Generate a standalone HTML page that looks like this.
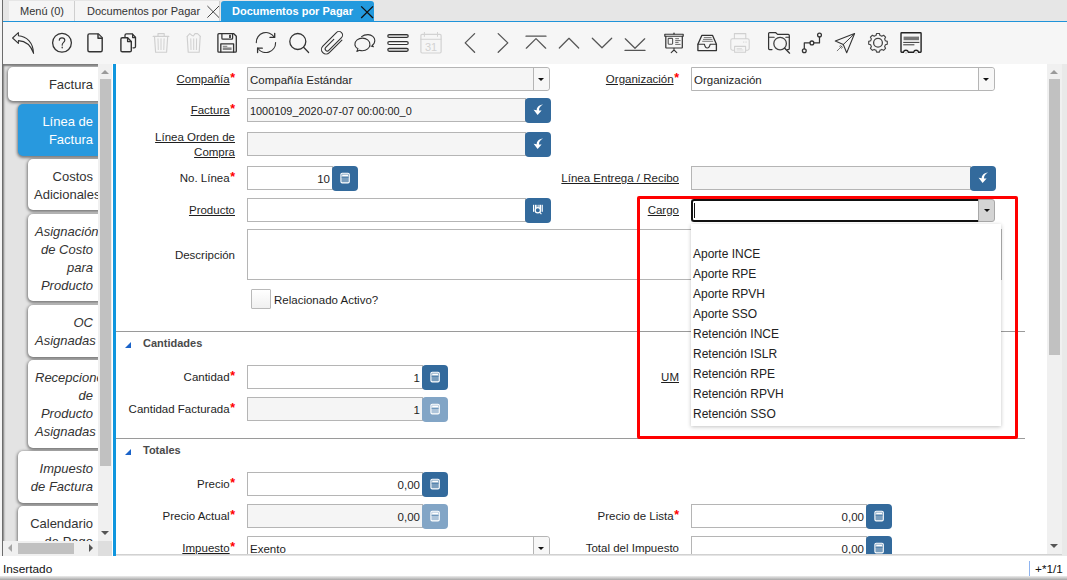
<!DOCTYPE html>
<html><head><meta charset="utf-8">
<style>
*{box-sizing:border-box;margin:0;padding:0}
html,body{width:1067px;height:580px;overflow:hidden;background:#fff;font-family:"Liberation Sans",sans-serif;color:#333}
.a{position:absolute}
/* tabs */
#tabbar{left:3px;top:0;width:1064px;height:21px;background:#e6e6e6}
.tab{position:absolute;top:1px;height:20px;background:#f5f5f5;font-size:11px;color:#333;line-height:20px}
#blueline{left:3px;top:21px;width:1064px;height:1px;background:#1f93d9}
#toolbar{left:3px;top:22px;width:1064px;height:42px;background:#f6f6f6}
/* left panel */
#lp{left:3px;top:64px;width:95px;height:477px;background:#e3e3e3;overflow:hidden;box-shadow:inset 2px 3px 2px -1px #7a7a7a}
.vt{position:absolute;right:-5px;background:#fff;border-radius:5px;box-shadow:0 1px 3px 1px rgba(0,0,0,.46);font-size:13px;line-height:18px;color:#333;text-align:right;padding-right:10px}
.vt.i{font-style:italic}
/* form */
#form{left:116px;top:64px;width:931px;height:490px;background:#fff;overflow:hidden}
.lbl{position:absolute;font-size:11.5px;color:#1e1e1e;text-align:right;white-space:nowrap}
.lbl u{text-decoration:underline;text-underline-offset:1px}
.req{color:#f00;font-weight:bold;font-size:12.5px;position:relative;top:-1px;margin-left:0.5px}
.box{position:absolute;height:24px;border:1px solid #b5b5b5;background:#fff;font-size:11.5px;line-height:22px;padding:1px 2px 0 2px;color:#1e1e1e;white-space:nowrap;overflow:hidden}
.ro{background:#f5f5f5}
.btn{position:absolute;width:26px;height:25px;background:#336a9c;border-radius:4px}
.btn.dis{background:#82a5c6}
.sec{position:absolute;left:0;height:1px;background:#9a9a9a;width:909px}
.sech{position:absolute;font-size:11px;font-weight:bold;color:#4a4a4a}
.tri{position:absolute;width:0;height:0;border-left:6px solid transparent;border-bottom:6px solid #1a63c9}
.combo{border-radius:0 3px 3px 0}
.combo .dd{position:absolute;right:0;top:0;width:16px;height:22px;border-left:1px solid #b5b5b5;background:#f7f7f7;border-radius:0 3px 3px 0}
.combo .dd:after{content:"";position:absolute;left:4px;top:9.5px;border-left:3.5px solid transparent;border-right:3.5px solid transparent;border-top:3.5px solid #111}
.fdd{border:1px solid #a8a8a8;background:#d4d4d4;border-radius:0 3px 3px 0}
.fdd:after{content:"";position:absolute;left:4.5px;top:9px;border-left:3.5px solid transparent;border-right:3.5px solid transparent;border-top:3.5px solid #111}
.caret{position:absolute;left:1px;top:2px;width:1px;height:15px;background:#111}
.chk{position:absolute;width:20px;height:20px;border:1px solid #b9b9b9;border-radius:1px;background:linear-gradient(#fff,#f0f0f0)}
</style></head>
<body>
<div class="a" style="left:0;top:0;width:2px;height:580px;background:#f5f5f5"></div>
<div class="a" style="left:2px;top:0;width:1px;height:580px;background:#6c6c6c"></div>

<div id="tabbar" class="a">
  <div class="tab" style="left:6px;width:66px;border-right:1px solid #cfcfcf;padding-left:11px">Menú (0)</div>
  <div class="tab" style="left:72px;width:145px;border-right:1px solid #cfcfcf;padding-left:12px">Documentos por Pagar</div>
  <div class="tab" style="left:218px;width:153px;background:#239ade;color:#fff;font-weight:bold;border-radius:3px 3px 0 0;padding-left:11px">Documentos por Pagar</div>
</div>
<div id="blueline" class="a"></div>
<svg class="a" style="left:0;top:0" width="400" height="21"><path d="M207.4,6 L219,17.6 M219,6 L207.4,17.6" stroke="#444" stroke-width="1"/><path d="M361.2,6.4 L373,18 M373,6.4 L361.2,18" stroke="#111" stroke-width="1.3"/></svg>
<div id="toolbar" class="a"></div>
<!--icons--><svg class="a" style="left:0;top:0" width="1067" height="64" viewBox="0 0 1067 64"><path d="M12.6,38 L18.4,32.6 L18.4,35.7 C26.5,36.2 33.2,42.5 33.6,53.4 C31,45.5 25.5,41 18.4,40.6 L18.4,43.4 Z" stroke="#333" stroke-width="1.06" fill="none" stroke-linejoin="round" stroke-linecap="round" /><circle cx="62" cy="42.8" r="9.4" stroke="#333" stroke-width="1.3" fill="none"/><path d="M59.3,40.3 C59.3,38.6 60.6,37.9 62,37.9 C63.6,37.9 64.8,38.9 64.8,40.3 C64.8,42.2 62.2,42.5 62.2,44.8 L62.2,45.3" stroke="#333" stroke-width="1.14" fill="none" stroke-linejoin="round" stroke-linecap="round" /><path d="M62.2,47.2 L62.2,47.8" stroke="#333" stroke-width="1.32" fill="none" stroke-linejoin="round" stroke-linecap="round" /><path d="M89.4,33.9 H98.4 L102.2,37.7 V50.3 Q102.2,51.8 100.7,51.8 H89.4 Q87.9,51.8 87.9,50.3 V35.4 Q87.9,33.9 89.4,33.9 Z" stroke="#333" stroke-width="1.41" fill="none" stroke-linejoin="round" stroke-linecap="round" /><path d="M98,34.2 V38.2 H102" stroke="#333" stroke-width="1.41" fill="#d8d8d8" stroke-linejoin="round" stroke-linecap="round" /><path d="M125,36.8 V35.2 Q125,33.8 126.4,33.8 H132 L135.5,37.3 V46.4 Q135.5,47.8 134.1,47.8 H133" stroke="#333" stroke-width="1.32" fill="none" stroke-linejoin="round" stroke-linecap="round" /><path d="M132.6,34 V37.6 H135.3" stroke="#333" stroke-width="1.23" fill="none" stroke-linejoin="round" stroke-linecap="round" /><path d="M122.3,37.8 H127.6 L131.3,41.5 V50.4 Q131.3,51.8 129.9,51.8 H122.3 Q120.9,51.8 120.9,50.4 V39.2 Q120.9,37.8 122.3,37.8 Z" stroke="#333" stroke-width="1.41" fill="none" stroke-linejoin="round" stroke-linecap="round" /><path d="M127.6,38 V41.6 H131.1" stroke="#333" stroke-width="1.32" fill="none" stroke-linejoin="round" stroke-linecap="round" /><path d="M153.2,36.4 H168.8" stroke="#cfcfcf" stroke-width="1.23" fill="none" stroke-linejoin="round" stroke-linecap="round" /><path d="M158,36.2 V33.6 H164.2 V36.2" stroke="#cfcfcf" stroke-width="1.14" fill="none" stroke-linejoin="round" stroke-linecap="round" /><path d="M154.5,36.6 L155.6,52.2 H166.6 L167.7,36.6" stroke="#cfcfcf" stroke-width="1.14" fill="none" stroke-linejoin="round" stroke-linecap="round" /><path d="M158,38.8 L158.3,49.6 M161,38.8 V49.6 M164.1,38.8 L163.8,49.6" stroke="#cfcfcf" stroke-width="0.97" fill="none" stroke-linejoin="round" stroke-linecap="round" /><path d="M187.2,36.4 L189.8,33.6 L192.2,35.6 L193.4,36 L195,33.6 L197.5,33.6 L200.4,36.4" stroke="#cfcfcf" stroke-width="1.06" fill="none" stroke-linejoin="round" stroke-linecap="round" /><path d="M187.2,36.6 L188.2,52.2 H199.2 L200.2,36.6" stroke="#cfcfcf" stroke-width="1.14" fill="none" stroke-linejoin="round" stroke-linecap="round" /><path d="M190.8,38.8 L191,49.6 M193.7,38.8 V49.6 M196.6,38.8 L196.4,49.6" stroke="#cfcfcf" stroke-width="0.97" fill="none" stroke-linejoin="round" stroke-linecap="round" /><path d="M218.9,33.7 H233.8 L236.3,36.3 V51.2 Q236.3,52.2 235.3,52.2 H218.9 Q217.9,52.2 217.9,51.2 V34.7 Q217.9,33.7 218.9,33.7 Z" stroke="#333" stroke-width="1.32" fill="none" stroke-linejoin="round" stroke-linecap="round" /><path d="M221.9,33.9 V38.2 Q221.9,39.2 222.9,39.2 H231.6 Q232.6,39.2 232.6,38.2 V33.9" stroke="#333" stroke-width="1.23" fill="none" stroke-linejoin="round" stroke-linecap="round" /><rect x="229.2" y="34.8" width="1.6" height="3.2" fill="#222"/><path d="M220.8,52 V43.9 H233.6 V52" stroke="#333" stroke-width="1.32" fill="none" stroke-linejoin="round" stroke-linecap="round" /><rect x="222.8" y="45.8" width="4.5" height="1" fill="#777"/><rect x="222.8" y="47.4" width="8.8" height="2.6" fill="#888"/><path d="M256.3,42.6 A9.7,9.7 0 0 1 274.3,37.2" stroke="#333" stroke-width="1.14" fill="none" stroke-linejoin="round" stroke-linecap="round" /><path d="M274.7,33.3 V37.4 H270" stroke="#333" stroke-width="1.32" fill="none" stroke-linejoin="round" stroke-linecap="round" /><path d="M275.6,42.6 A9.7,9.7 0 0 1 257.7,48" stroke="#333" stroke-width="1.14" fill="none" stroke-linejoin="round" stroke-linecap="round" /><path d="M257.6,52.5 V48.2 H262.3" stroke="#333" stroke-width="1.32" fill="none" stroke-linejoin="round" stroke-linecap="round" /><circle cx="297.8" cy="41.5" r="8" stroke="#333" stroke-width="1.3" fill="none"/><path d="M303.6,47.3 L308.6,52.5" stroke="#333" stroke-width="1.23" fill="none" stroke-linejoin="round" stroke-linecap="round" /><g transform="translate(332.3,42.6) rotate(45)"><path d="M5,-8.6 V9.2 A4.6,4.6 0 0 1 -4.2,9.2 V-10 A3.6,3.6 0 0 1 3,-10 V8 A2.1,2.1 0 0 1 -1.2,8 V-3.3" stroke="#333" stroke-width="1.1" fill="none" stroke-linecap="round"/></g><path d="M361.6,36.6 C363,35.4 365.5,34.6 368,34.6 C371.8,34.6 374.8,37.2 374.8,40.3 C374.8,42.6 373.8,44.4 372.3,45.2 L373.4,46.8 L370.8,46" stroke="#333" stroke-width="1.06" fill="none" stroke-linejoin="round" stroke-linecap="round" /><path d="M356.8,51.4 L358,48.6 C355.8,47.4 354.9,45.8 354.9,44.4 C354.9,40.7 358.3,38.1 362.4,38.1 C366.5,38.1 369.9,40.7 369.9,44.4 C369.9,48 366.5,50.7 362.4,50.7 C361.3,50.7 360.3,50.5 359.4,50.2 Z" stroke="#333" stroke-width="1.06" fill="none" stroke-linejoin="round" stroke-linecap="round" /><rect x="387.8" y="34.6" width="20.4" height="2.9" rx="1.45" stroke="#333" stroke-width="1.2" fill="#cfcfcf"/><rect x="387.8" y="41.6" width="20.4" height="2.9" rx="1.45" stroke="#333" stroke-width="1.2" fill="#fff"/><rect x="387.8" y="48.4" width="20.4" height="2.9" rx="1.45" stroke="#333" stroke-width="1.2" fill="#cfcfcf"/><rect x="420.9" y="34.4" width="20.2" height="18.6" rx="1.2" stroke="#d2d2d2" stroke-width="1.2" fill="none"/><path d="M421,39.3 H441" stroke="#d2d2d2" stroke-width="0.97" fill="none" stroke-linejoin="round" stroke-linecap="round" /><path d="M424.4,32.4 V36.4 M437.5,32.4 V36.4" stroke="#d2d2d2" stroke-width="0.97" fill="none" stroke-linejoin="round" stroke-linecap="round" /><text x="431" y="50.8" font-family="Liberation Sans" font-size="11" fill="#d2d2d2" text-anchor="middle">31</text><path d="M474.6,33.6 L465.2,42.9 L474.6,52.2" stroke="#555" stroke-width="1.32" fill="none" stroke-linejoin="round" stroke-linecap="round" stroke-linecap="butt"/><path d="M498.2,33.6 L507.8,42.9 L498.2,52.2" stroke="#555" stroke-width="1.32" fill="none" stroke-linejoin="round" stroke-linecap="round" stroke-linecap="butt"/><path d="M526,36.2 H546" stroke="#555" stroke-width="1.23" fill="none" stroke-linejoin="round" stroke-linecap="round" stroke-linecap="butt"/><path d="M526.3,48.2 L536,38.6 L545.7,48.2" stroke="#555" stroke-width="1.23" fill="none" stroke-linejoin="round" stroke-linecap="round" stroke-linecap="butt"/><path d="M559.3,48 L569,38.3 L578.7,48" stroke="#555" stroke-width="1.23" fill="none" stroke-linejoin="round" stroke-linecap="round" stroke-linecap="butt"/><path d="M592.3,38.2 L602,47.8 L611.7,38.2" stroke="#555" stroke-width="1.23" fill="none" stroke-linejoin="round" stroke-linecap="round" stroke-linecap="butt"/><path d="M625.3,38.8 L635,48.3 L644.7,38.8" stroke="#555" stroke-width="1.23" fill="none" stroke-linejoin="round" stroke-linecap="round" stroke-linecap="butt"/><path d="M625,50.4 H645" stroke="#555" stroke-width="1.23" fill="none" stroke-linejoin="round" stroke-linecap="round" stroke-linecap="butt"/><path d="M664.8,34.2 H683.2 V36.2 H664.8 Z" stroke="#333" stroke-width="1.14" fill="none" stroke-linejoin="round" stroke-linecap="round" /><path d="M674,33.8 V33.2" stroke="#333" stroke-width="1.41" fill="none" stroke-linejoin="round" stroke-linecap="round" /><path d="M665.8,36.4 V47.5 Q665.8,48 666.3,48 H681.8 Q682.3,48 682.3,47.5 V36.4" stroke="#333" stroke-width="1.23" fill="none" stroke-linejoin="round" stroke-linecap="round" /><rect x="668.2" y="38.4" width="4.4" height="5.8" rx="0.6" stroke="#555" stroke-width="1.1" fill="none"/><path d="M675.6,38.7 H678.6 M675.6,40.6 H680.2 M675.6,42.4 H678.2 M675.6,44.4 H680.2" stroke="#444" stroke-width="0.79" fill="none" stroke-linejoin="round" stroke-linecap="round" stroke-linecap="butt"/><path d="M674,48.2 V50 L671.2,52.6 M674,50 L676.8,52.6" stroke="#333" stroke-width="1.06" fill="none" stroke-linejoin="round" stroke-linecap="round" /><path d="M701.8,35.4 H712.6 L716.4,44.2 V50.6 H697.9 V44.2 Z" stroke="#333" stroke-width="1.32" fill="none" stroke-linejoin="round" stroke-linecap="round" /><path d="M698,44.2 H704.4 C705,47.4 706.2,48 707.2,48 C708.4,48 709.6,47.4 710.2,44.2 H716.3" stroke="#333" stroke-width="1.14" fill="none" stroke-linejoin="round" stroke-linecap="round" /><path d="M704.2,37.6 H711.2 M703.4,39.4 H712 M702.6,41.3 H712.8" stroke="#555" stroke-width="0.79" fill="none" stroke-linejoin="round" stroke-linecap="round" stroke-linecap="butt"/><path d="M734.4,38.4 V33.6 H745.8 V38.4" stroke="#d0d0d0" stroke-width="1.06" fill="none" stroke-linejoin="round" stroke-linecap="round" /><path d="M733.6,50.2 H732.4 Q730.8,50.2 730.8,48.6 V40.4 Q730.8,38.8 732.4,38.8 H747.6 Q749.2,38.8 749.2,40.4 V48.6 Q749.2,50.2 747.6,50.2 H746.4" stroke="#d0d0d0" stroke-width="1.06" fill="none" stroke-linejoin="round" stroke-linecap="round" /><path d="M734.6,46.4 H745.6 V52.2 H734.6 Z" stroke="#d0d0d0" stroke-width="1.06" fill="none" stroke-linejoin="round" stroke-linecap="round" /><path d="M737,48.6 H741.5 M737,50 H743" stroke="#d0d0d0" stroke-width="0.7" fill="none" stroke-linejoin="round" stroke-linecap="round" /><path d="M743.4,42.1 H743.9 M745.8,42.1 H746.3" stroke="#d0d0d0" stroke-width="0.88" fill="none" stroke-linejoin="round" stroke-linecap="round" /><path d="M772,49.6 H769.6 Q768.6,49.6 768.6,48.6 V33.6 Q768.6,32.7 769.6,32.7 H775.8 L777.6,34.4 H788.3 Q789.3,34.4 789.3,35.4 V48.6 Q789.3,49.6 788.3,49.6 H787.4" stroke="#333" stroke-width="1.23" fill="none" stroke-linejoin="round" stroke-linecap="round" /><path d="M768.8,37.2 H774.2 M785.8,37.2 H789.2" stroke="#333" stroke-width="1.14" fill="none" stroke-linejoin="round" stroke-linecap="round" /><circle cx="780.1" cy="43.6" r="6.3" stroke="#444" stroke-width="1.3" fill="none"/><path d="M784.7,48.2 L789.6,53.2" stroke="#333" stroke-width="1.23" fill="none" stroke-linejoin="round" stroke-linecap="round" /><path d="M804.3,48.7 V42.9 H809.9 M813.9,42.9 H819.5 V37" stroke="#333" stroke-width="1.23" fill="none" stroke-linejoin="round" stroke-linecap="round" stroke-linecap="butt"/><circle cx="804.3" cy="50.7" r="1.9" stroke="#333" stroke-width="1.3" fill="none"/><circle cx="811.9" cy="42.9" r="1.9" stroke="#333" stroke-width="1.3" fill="none"/><circle cx="819.5" cy="35" r="1.9" stroke="#333" stroke-width="1.3" fill="none"/><path d="M854.6,33.5 L835.3,41.1 L843.3,44.5 L846.7,52.7 Z" stroke="#333" stroke-width="1.06" fill="none" stroke-linejoin="round" stroke-linecap="round" /><path d="M843.3,44.5 L854.2,34" stroke="#333" stroke-width="0.97" fill="none" stroke-linejoin="round" stroke-linecap="round" /><path d="M837.2,50.8 L842,46 M839.6,46.4 L841.6,48.3 M840.6,45.6 L842.6,47.4" stroke="#555" stroke-width="0.79" fill="none" stroke-linejoin="round" stroke-linecap="round" /><path d="M885.32,40.77 L887.29,41.40 L887.29,44.20 L885.32,44.83 A7.6,7.6 0 0 1 884.61,46.55 L884.61,46.55 L885.57,48.38 L883.58,50.37 L881.75,49.41 A7.6,7.6 0 0 1 880.03,50.12 L880.03,50.12 L879.40,52.09 L876.60,52.09 L875.97,50.12 A7.6,7.6 0 0 1 874.25,49.41 L874.25,49.41 L872.42,50.37 L870.43,48.38 L871.39,46.55 A7.6,7.6 0 0 1 870.68,44.83 L870.68,44.83 L868.71,44.20 L868.71,41.40 L870.68,40.77 A7.6,7.6 0 0 1 871.39,39.05 L871.39,39.05 L870.43,37.22 L872.42,35.23 L874.25,36.19 A7.6,7.6 0 0 1 875.97,35.48 L875.97,35.48 L876.60,33.51 L879.40,33.51 L880.03,35.48 A7.6,7.6 0 0 1 881.75,36.19 L881.75,36.19 L883.58,35.23 L885.57,37.22 L884.61,39.05 A7.6,7.6 0 0 1 885.32,40.77 Z" stroke="#444" stroke-width="1.14" fill="none" stroke-linejoin="round" stroke-linecap="round" /><circle cx="878" cy="42.8" r="4.4" stroke="#444" stroke-width="1.3" fill="none"/><path d="M901.6,32.8 H920.5 Q921.1,32.8 921.1,33.4 V51.6 Q921.1,52.2 920.5,52.2 H918.6 A2.6,2.6 0 0 0 913.6,52.2 H908.4 A2.6,2.6 0 0 0 903.4,52.2 H901.6 Q901,52.2 901,51.6 V33.4 Q901,32.8 901.6,32.8 Z" stroke="#222" stroke-width="1.41" fill="none" stroke-linejoin="round" stroke-linecap="round" /><rect x="903.6" y="36.6" width="15.4" height="3.6" fill="#777"/><path d="M903.6,42.4 H919 M903.6,44.8 H914" stroke="#333" stroke-width="0.97" fill="none" stroke-linejoin="round" stroke-linecap="round" stroke-linecap="butt"/><path d="M906,53 H906.1 M916,53 H916.1" stroke="#666" stroke-width="0.88" fill="none" stroke-linejoin="round" stroke-linecap="round" /></svg><!--/icons-->

<div id="lp" class="a">
  <div class="vt" style="left:5px;top:3px;height:34px;padding-top:9px">Factura</div>
  <div class="vt" style="left:15px;top:40px;height:52px;padding-top:9px;background:#2899de;color:#fff">Línea de<br>Factura</div>
  <div class="vt" style="left:25px;top:95px;height:51px;padding-top:9px;padding-left:6px">Costos<br>Adicionales</div>
  <div class="vt i" style="left:25px;top:150px;height:87px;padding-top:9px;padding-left:7px">Asignación<br>de Costo<br>para<br>Producto</div>
  <div class="vt i" style="left:25px;top:241px;height:52px;padding-top:9px;padding-left:7px">OC<br>Asignadas</div>
  <div class="vt i" style="left:25px;top:296px;height:88px;padding-top:9px;padding-left:7px">Recepciones<br>de<br>Producto<br>Asignadas</div>
  <div class="vt i" style="left:15px;top:387px;height:52px;padding-top:9px">Impuesto<br>de Factura</div>
  <div class="vt" style="left:15px;top:442px;height:60px;padding-top:9px">Calendario<br>de Pago</div>
</div>
<div class="a" style="left:98px;top:64px;width:14px;height:477px;background:#f0f0f0"></div>
<div class="a" style="left:101px;top:70px;width:0;height:0;border-left:4.5px solid transparent;border-right:4.5px solid transparent;border-bottom:4px solid #9a9a9a"></div>
<div class="a" style="left:100px;top:79px;width:11px;height:387px;background:#c1c1c1"></div>
<div class="a" style="left:101px;top:531px;width:0;height:0;border-left:4.5px solid transparent;border-right:4.5px solid transparent;border-top:4px solid #555"></div>
<div class="a" style="left:3px;top:541px;width:109px;height:15px;background:#f0f0f0"></div>
<div class="a" style="left:8px;top:544px;width:0;height:0;border-top:4.5px solid transparent;border-bottom:4.5px solid transparent;border-right:4px solid #a5a5a5"></div>
<div class="a" style="left:18px;top:543px;width:56px;height:11px;background:#c1c1c1"></div>
<div class="a" style="left:98px;top:541px;width:14px;height:15px;background:#dedede"></div>
<div class="a" style="left:89px;top:544px;width:0;height:0;border-top:4.5px solid transparent;border-bottom:4.5px solid transparent;border-left:4px solid #555"></div>
<div class="a" style="left:113px;top:64px;width:3px;height:492px;background:#0f96de"></div>
<div id="form" class="a">
<div class="lbl" style="left:-181px;top:3px;width:300px;line-height:24px"><u>Compañía</u><span class="req">*</span></div>
<div class="box combo" style="left:131px;top:3px;width:303px;background:#f5f5f5">Compañía Estándar<span class="dd"></span></div>
<div class="lbl" style="left:263px;top:3px;width:300px;line-height:24px"><u>Organización</u><span class="req">*</span></div>
<div class="box combo" style="left:575px;top:3px;width:304px;background:#fff">Organización<span class="dd"></span></div>
<div class="lbl" style="left:-181px;top:34px;width:300px;line-height:24px"><u>Factura</u><span class="req">*</span></div>
<div class="box ro" style="left:131px;top:34px;width:279px;height:24px;font-size:10.9px">1000109_2020-07-07 00:00:00_0</div>
<div class="btn" style="left:409px;top:34px;width:26px;height:25px"><svg width="26" height="25" style="position:absolute;left:0;top:0"><path d="M18,6.4 C13.8,6.8 11.4,9.6 11.8,12.2 L8.6,11.8 L12.6,17 L16.6,12.4 L14,12.4 C13.8,10.2 15.2,7.8 18,6.4 Z" fill="#fff"/></svg></div>
<div class="lbl" style="left:-181px;top:66px;width:300px;line-height:15px"><u>Línea Orden de</u><br><u>Compra</u></div>
<div class="box ro" style="left:131px;top:68px;width:279px;height:24px;"></div>
<div class="btn" style="left:409px;top:68px;width:26px;height:25px"><svg width="26" height="25" style="position:absolute;left:0;top:0"><path d="M18,6.4 C13.8,6.8 11.4,9.6 11.8,12.2 L8.6,11.8 L12.6,17 L16.6,12.4 L14,12.4 C13.8,10.2 15.2,7.8 18,6.4 Z" fill="#fff"/></svg></div>
<div class="lbl" style="left:-181px;top:102px;width:300px;line-height:24px">No. Línea<span class="req">*</span></div>
<div class="box" style="left:131px;top:102px;width:86px;height:24px;text-align:right;">10</div>
<div class="btn" style="left:216px;top:102px;width:26px;height:25px"><svg width="26" height="25" style="position:absolute;left:0;top:0"><rect x="8.9" y="7.2" width="8.4" height="9.7" rx="1.3" stroke="#fff" stroke-width="1.1" fill="rgba(255,255,255,0.35)"/><rect x="10.2" y="8.6" width="5.8" height="1.7" fill="#fff"/><rect x="9.6" y="11" width="7" height="0.8" fill="#346a9c" opacity="0.6"/></svg></div>
<div class="lbl" style="left:263px;top:102px;width:300px;line-height:24px"><u>Línea Entrega / Recibo</u></div>
<div class="box ro" style="left:575px;top:102px;width:280px;height:24px;"></div>
<div class="btn" style="left:854px;top:102px;width:26px;height:25px"><svg width="26" height="25" style="position:absolute;left:0;top:0"><path d="M18,6.4 C13.8,6.8 11.4,9.6 11.8,12.2 L8.6,11.8 L12.6,17 L16.6,12.4 L14,12.4 C13.8,10.2 15.2,7.8 18,6.4 Z" fill="#fff"/></svg></div>
<div class="lbl" style="left:-181px;top:134px;width:300px;line-height:24px"><u>Producto</u></div>
<div class="box" style="left:131px;top:134px;width:279px;height:24px;"></div>
<div class="btn" style="left:409px;top:134px;width:26px;height:25px"><svg width="26" height="25" style="position:absolute;left:0;top:0"><g fill="#fff"><rect x="8" y="6.8" width="1.2" height="7"/><rect x="10" y="6.8" width="1.6" height="7"/><rect x="12.6" y="6.8" width="1" height="3"/><rect x="14.4" y="6.8" width="1.6" height="7"/><rect x="16.6" y="6.8" width="1.2" height="7"/></g><circle cx="12.8" cy="12.2" r="2.6" stroke="#fff" stroke-width="1.2" fill="#346a9c"/><path d="M14.6,14.2 L16.4,16.2" stroke="#fff" stroke-width="1.1"/></svg></div>
<div class="lbl" style="left:-181px;top:166px;width:300px;line-height:51px">Descripción</div>
<div class="box" style="left:131px;top:165px;width:755px;height:51px;"></div>
<div class="chk" style="left:135px;top:225px"></div>
<div class="lbl" style="left:158px;top:224px;text-align:left;line-height:24px">Relacionado Activo?</div>
<div class="sec" style="top:267px"></div>
<div class="tri" style="left:9px;top:278px"></div>
<div class="sech" style="left:27px;top:271px;line-height:16px">Cantidades</div>
<div class="lbl" style="left:-181px;top:301px;width:300px;line-height:24px">Cantidad<span class="req">*</span></div>
<div class="box" style="left:131px;top:301px;width:176px;height:24px;text-align:right;">1</div>
<div class="btn" style="left:306px;top:301px;width:26px;height:25px"><svg width="26" height="25" style="position:absolute;left:0;top:0"><rect x="8.9" y="7.2" width="8.4" height="9.7" rx="1.3" stroke="#fff" stroke-width="1.1" fill="rgba(255,255,255,0.35)"/><rect x="10.2" y="8.6" width="5.8" height="1.7" fill="#fff"/><rect x="9.6" y="11" width="7" height="0.8" fill="#346a9c" opacity="0.6"/></svg></div>
<div class="lbl" style="left:263px;top:301px;width:300px;line-height:24px"><u>UM</u></div>
<div class="lbl" style="left:-181px;top:333px;width:300px;line-height:24px">Cantidad Facturada<span class="req">*</span></div>
<div class="box ro" style="left:131px;top:333px;width:176px;height:24px;text-align:right;">1</div>
<div class="btn dis" style="left:306px;top:333px;width:26px;height:25px"><svg width="26" height="25" style="position:absolute;left:0;top:0"><rect x="8.9" y="7.2" width="8.4" height="9.7" rx="1.3" stroke="#fff" stroke-width="1.1" fill="rgba(255,255,255,0.35)"/><rect x="10.2" y="8.6" width="5.8" height="1.7" fill="#fff"/><rect x="9.6" y="11" width="7" height="0.8" fill="#346a9c" opacity="0.6"/></svg></div>
<div class="sec" style="top:374px"></div>
<div class="tri" style="left:9px;top:385px"></div>
<div class="sech" style="left:27px;top:378px;line-height:16px">Totales</div>
<div class="lbl" style="left:-181px;top:408px;width:300px;line-height:24px">Precio<span class="req">*</span></div>
<div class="box" style="left:131px;top:408px;width:176px;height:24px;text-align:right;">0,00</div>
<div class="btn" style="left:306px;top:408px;width:26px;height:25px"><svg width="26" height="25" style="position:absolute;left:0;top:0"><rect x="8.9" y="7.2" width="8.4" height="9.7" rx="1.3" stroke="#fff" stroke-width="1.1" fill="rgba(255,255,255,0.35)"/><rect x="10.2" y="8.6" width="5.8" height="1.7" fill="#fff"/><rect x="9.6" y="11" width="7" height="0.8" fill="#346a9c" opacity="0.6"/></svg></div>
<div class="lbl" style="left:-181px;top:440px;width:300px;line-height:24px">Precio Actual<span class="req">*</span></div>
<div class="box ro" style="left:131px;top:440px;width:176px;height:24px;text-align:right;">0,00</div>
<div class="btn dis" style="left:306px;top:440px;width:26px;height:25px"><svg width="26" height="25" style="position:absolute;left:0;top:0"><rect x="8.9" y="7.2" width="8.4" height="9.7" rx="1.3" stroke="#fff" stroke-width="1.1" fill="rgba(255,255,255,0.35)"/><rect x="10.2" y="8.6" width="5.8" height="1.7" fill="#fff"/><rect x="9.6" y="11" width="7" height="0.8" fill="#346a9c" opacity="0.6"/></svg></div>
<div class="lbl" style="left:263px;top:440px;width:300px;line-height:24px">Precio de Lista<span class="req">*</span></div>
<div class="box" style="left:575px;top:440px;width:176px;height:24px;text-align:right;">0,00</div>
<div class="btn" style="left:750px;top:440px;width:26px;height:25px"><svg width="26" height="25" style="position:absolute;left:0;top:0"><rect x="8.9" y="7.2" width="8.4" height="9.7" rx="1.3" stroke="#fff" stroke-width="1.1" fill="rgba(255,255,255,0.35)"/><rect x="10.2" y="8.6" width="5.8" height="1.7" fill="#fff"/><rect x="9.6" y="11" width="7" height="0.8" fill="#346a9c" opacity="0.6"/></svg></div>
<div class="lbl" style="left:-181px;top:472px;width:300px;line-height:24px"><u>Impuesto</u><span class="req">*</span></div>
<div class="box combo" style="left:131px;top:472px;width:303px;background:#fff">Exento<span class="dd"></span></div>
<div class="lbl" style="left:263px;top:472px;width:300px;line-height:24px">Total del Impuesto</div>
<div class="box" style="left:575px;top:472px;width:176px;height:24px;text-align:right;">0,00</div>
<div class="btn" style="left:750px;top:472px;width:26px;height:25px"><svg width="26" height="25" style="position:absolute;left:0;top:0"><rect x="8.9" y="7.2" width="8.4" height="9.7" rx="1.3" stroke="#fff" stroke-width="1.1" fill="rgba(255,255,255,0.35)"/><rect x="10.2" y="8.6" width="5.8" height="1.7" fill="#fff"/><rect x="9.6" y="11" width="7" height="0.8" fill="#346a9c" opacity="0.6"/></svg></div>
<div class="lbl" style="left:263px;top:134px;width:300px;line-height:24px"><u>Cargo</u></div>
<div class="a" style="left:575px;top:135px;width:288px;height:23px;border:2px solid #111;border-right:0;border-radius:3px 0 0 3px;background:#fff"><span class="caret"></span></div>
<div class="a fdd" style="left:862px;top:135px;width:17px;height:23px"></div>
</div><!--/form-->

<div class="a" style="left:0;top:556px;width:1067px;height:20px;background:#fff"></div>
<div class="a" style="left:1047px;top:64px;width:15px;height:491px;background:#f0f0f0"></div>
<div class="a" style="left:1050px;top:70px;width:0;height:0;border-left:4.5px solid transparent;border-right:4.5px solid transparent;border-bottom:4px solid #9a9a9a"></div>
<div class="a" style="left:1049px;top:79px;width:11px;height:276px;background:#c1c1c1"></div>
<div class="a" style="left:1050px;top:544px;width:0;height:0;border-left:4.5px solid transparent;border-right:4.5px solid transparent;border-top:4px solid #555"></div>
<div class="a" style="left:1062px;top:64px;width:5px;height:492px;background:#e9e9e9"></div>
<div class="a" style="left:116px;top:554px;width:946px;height:2px;background:linear-gradient(#c8c8c8,#eee)"></div>
<div class="a" style="left:3px;top:561px;font-size:11.8px;line-height:16px;color:#111">Insertado</div>
<div class="a" style="left:1029px;top:561px;width:1px;height:15px;background:#8fb4f0"></div>
<div class="a" style="left:1035px;top:561px;font-size:11.8px;line-height:16px;color:#111">+*1/1</div>
<div class="a pop" style="left:691px;top:224px;width:310px;height:202px;background:#fff;box-shadow:0 1px 4px rgba(0,0,0,.24);font-size:12px;line-height:20px;color:#222;padding:0 0 0 2px">&nbsp;<br>Aporte INCE<br>Aporte RPE<br>Aporte RPVH<br>Aporte SSO<br>Retención INCE<br>Retención ISLR<br>Retención RPE<br>Retención RPVH<br>Retención SSO</div>
<div class="a" style="left:637px;top:196px;width:381px;height:243px;border:3px solid #f00;border-radius:2px"></div>

<div class="a" style="left:0;top:576px;width:1067px;height:4px;background:linear-gradient(#ececec,#a6a6a6)"></div>
</body></html>
